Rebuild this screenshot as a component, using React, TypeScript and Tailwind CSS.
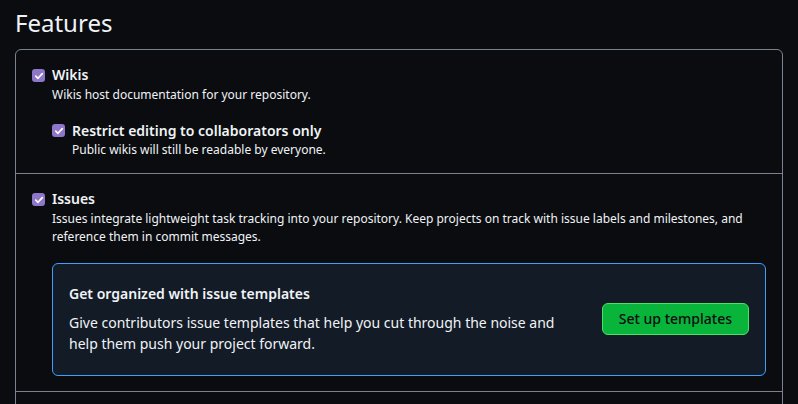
import React from "react";

function Check() {
  return (
    <span className="mt-[3px] flex h-[13px] w-[13px] shrink-0 items-center justify-center rounded-[3px] bg-[#8e76c8]">
      <svg width="10" height="10" viewBox="0 0 10 10" fill="none">
        <path d="M1.8 5.2 L4 7.3 L8.3 2.6" stroke="#ffffff" strokeWidth="1.7" strokeLinecap="round" strokeLinejoin="round" />
      </svg>
    </span>
  );
}

export default function App() {
  return (
    <div className="min-h-screen bg-[#0a0c10] px-[15px] pt-[5px] font-['Noto_Sans',sans-serif] text-[#f0f3f6]">
      <h2 className="mb-[8px] text-[24px] font-normal leading-[36px]">Features</h2>
      <div className="rounded-md border border-[#7a828e]">
        <div className="border-b border-[#7a828e] px-4 pb-[14px] pt-4">
          <div className="flex gap-[7px]">
            <Check />
            <div>
              <div className="text-sm font-semibold leading-[18px]">Wikis</div>
              <p className="mt-[2px] text-xs leading-[18px]">Wikis host documentation for your repository.</p>
              <div className="mt-[18px] flex gap-[7px]">
                <span className="-mt-[1px]"><Check /></span>
                <div>
                  <div className="text-sm font-semibold leading-[18px]">Restrict editing to collaborators only</div>
                  <p className="mt-[1px] text-xs leading-[18px]">Public wikis will still be readable by everyone.</p>
                </div>
              </div>
            </div>
          </div>
        </div>
        <div className="border-b border-[#7a828e] px-4 pb-[15px] pt-4">
          <div className="flex gap-[7px]">
            <Check />
            <div className="flex-1">
              <div className="text-sm font-semibold leading-[18px]">Issues</div>
              <p className="mt-[2px] text-xs leading-[18px]">
                Issues integrate lightweight task tracking into your repository. Keep projects on track with issue labels and milestones, and reference them in commit messages.
              </p>
              <div className="mt-[17px] flex items-center justify-between rounded-md border border-[#409eff] bg-[#131b26] pl-4 pr-4 pb-[21px] pt-[19px]">
                <div className="max-w-[500px]">
                  <h3 className="text-sm font-semibold leading-[21px]">Get organized with issue templates</h3>
                  <p className="mt-[8px] text-sm leading-[21px]">
                    Give contributors issue templates that help you cut through the noise and help them push your project forward.
                  </p>
                </div>
                <button className="h-[32px] shrink-0 rounded-md border border-[#4ae168] bg-[#09b43a] px-4 text-sm font-medium leading-[20px] text-[#0a0c10]">
                  Set up templates
                </button>
              </div>
            </div>
          </div>
        </div>
        <div className="h-[40px]" />
      </div>
    </div>
  );
}
